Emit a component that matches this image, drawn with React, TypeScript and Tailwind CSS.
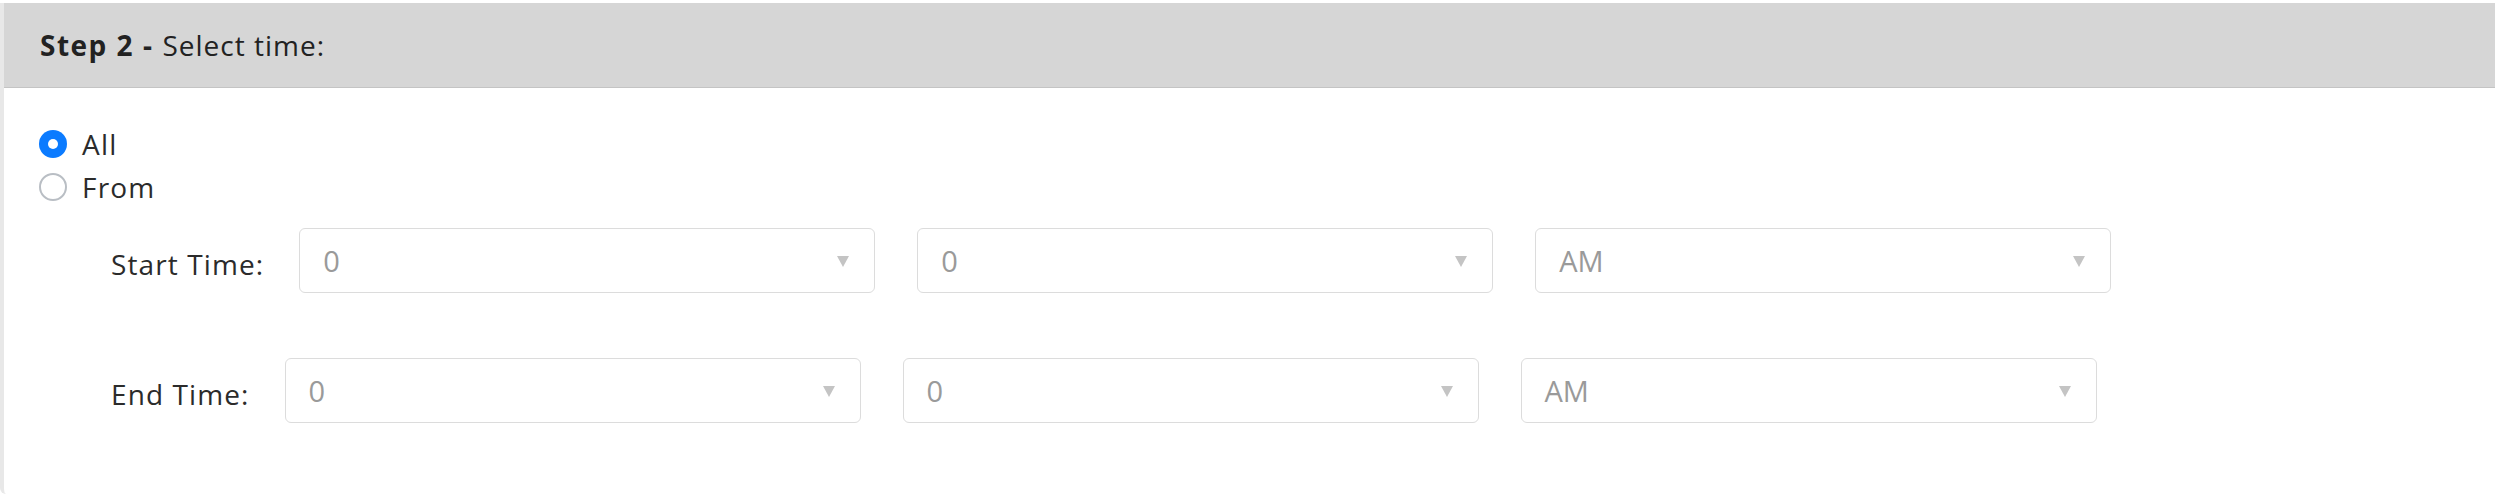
import { useState } from "react";

type TimeRowProps = {
  label: string;
  hour: string;
  minute: string;
  period: string;
};

function FakeSelect({ value }: { value: string }) {
  return (
    <div className="flex h-[65px] w-[576px] shrink-0 items-center justify-between rounded-[6px] border border-[#dcdcdc] bg-white pl-[23px] pr-[24px]">
      <span className="text-[29px] text-[#9a9a9a]">{value}</span>
      <svg width="14" height="13" viewBox="0 0 14 13" className="mt-[2px]">
        <polygon points="1,1 13,1 7,12" fill="#c4c4c4" />
      </svg>
    </div>
  );
}

function TimeRow({ label, hour, minute, period }: TimeRowProps) {
  return (
    <div className="flex items-center">
      <span className="mr-[35px] mt-[7px] text-[28px] tracking-[1.1px] text-[#2b2b2b]">{label}</span>
      <div className="flex gap-[42px]">
        <FakeSelect value={hour} />
        <FakeSelect value={minute} />
        <FakeSelect value={period} />
      </div>
    </div>
  );
}

function Radio({
  checked,
  label,
  onClick,
}: {
  checked: boolean;
  label: string;
  onClick: () => void;
}) {
  return (
    <div className="flex h-[43px] cursor-pointer items-center" onClick={onClick}>
      {checked ? (
        <span className="flex h-[28px] w-[28px] items-center justify-center rounded-full bg-[#0b7bff]">
          <span className="h-[10px] w-[10px] rounded-full bg-white" />
        </span>
      ) : (
        <span className="h-[28px] w-[28px] rounded-full border-2 border-[#b9bec4] bg-white" />
      )}
      <span className="ml-[15px] text-[28px] tracking-[1.2px] text-[#2b2b2b]">{label}</span>
    </div>
  );
}

export default function App() {
  const [mode, setMode] = useState<"all" | "from">("all");

  return (
    <div
      className="h-[496px] w-full overflow-hidden bg-white pt-[3px]"
      style={{ fontFamily: '"Open Sans", "Noto Sans", sans-serif' }}
    >
      <div className="h-[491px] rounded-bl-[6px] border-l-4 border-[#e8e8e8] bg-white">
        {/* Header */}
        <div className="flex h-[85px] items-center border-b border-[#c4c4c4] bg-[#d6d6d6] pl-[36px] text-[28px] tracking-[1px] text-[#222]">
          <span className="font-bold tracking-[1.5px]">Step 2 -</span>
          <span className="ml-[9px]">Select time:</span>
        </div>

        {/* Body */}
        <div className="pl-[35px] pt-[34px]">
          <Radio checked={mode === "all"} label="All" onClick={() => setMode("all")} />
          <Radio checked={mode === "from"} label="From" onClick={() => setMode("from")} />

          <div className="mt-[20px] flex flex-col gap-[65px] pl-[72px]">
            <TimeRow label="Start Time:" hour="0" minute="0" period="AM" />
            <TimeRow label="End Time:" hour="0" minute="0" period="AM" />
          </div>
        </div>
      </div>
    </div>
  );
}
